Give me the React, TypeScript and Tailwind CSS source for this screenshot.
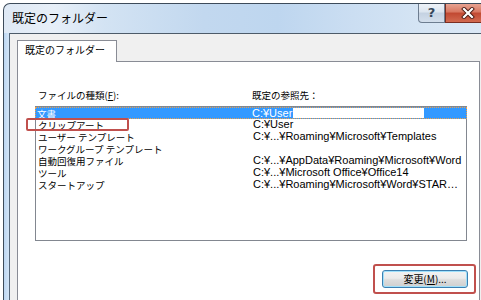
import React from 'react';

const rows = [
	{ name: "文書", path: "C:¥User", hidden: true },
	{ name: "クリップアート", path: "C:¥User" },
	{ name: "ユーザー テンプレート", path: "C:¥...¥Roaming¥Microsoft¥Templates" },
	{ name: "ワークグループ テンプレート", path: "" },
	{ name: "自動回復用ファイル", path: "C:¥...¥AppData¥Roaming¥Microsoft¥Word" },
	{ name: "ツール", path: "C:¥...¥Microsoft Office¥Office14" },
	{ name: "スタートアップ", path: "C:¥...¥Roaming¥Microsoft¥Word¥STAR…" },
];

const App: React.FC = () => {
	return (
		<div className="relative w-[481px] h-[300px] overflow-hidden bg-white pl-[3px] pt-[3px] font-['Noto_Sans_CJK_JP',sans-serif] text-black">
			<div className="flex flex-col w-[500px] h-[320px] rounded-tl-[7px] border-l border-t border-[#3d4b5a] overflow-hidden bg-[linear-gradient(90deg,#dfe9f5_0%,#e7eff8_10%,#d3e3f3_20%,#c2d8ef_40%,#bed6ef_55%,#cbdef2_70%,#d6e5f4_85%,#dde9f6_100%)]">
				{/* title bar */}
				<div className="flex h-[29px] pl-[8px]">
					<span className="self-center text-[12px] leading-none -mt-[1px]">既定のフォルダー</span>
					<div className="ml-auto mr-[13px] flex self-start -mt-px">
						<div className="w-[27px] h-[20px] rounded-bl-[4px] border border-t-0 border-[#6d7d90] bg-[linear-gradient(180deg,#f0f4f9_0%,#dde6f0_45%,#c5d2e2_55%,#d3dfec_100%)] flex items-center justify-center">
							<span className="text-[13px] font-bold leading-none text-[#36475a] font-['DejaVu_Sans',sans-serif]">?</span>
						</div>
						<div className="w-[45px] h-[20px] border border-t-0 border-[#7a2e22] bg-[linear-gradient(180deg,#e9a897_0%,#d97a64_45%,#c24a33_55%,#d26a50_100%)] flex items-center justify-center">
							<svg width="14" height="12" viewBox="0 0 14 12">
								<path d="M3 2 L11 10 M11 2 L3 10" stroke="#4a1a12" strokeWidth="4" strokeLinecap="square" />
								<path d="M3 2 L11 10 M11 2 L3 10" stroke="#ffffff" strokeWidth="2.2" strokeLinecap="square" />
							</svg>
						</div>
					</div>
				</div>

				<div className="flex flex-1">
					{/* left frame */}
					<div className="w-[5px] bg-[linear-gradient(90deg,#bcd6f1,#d3e5f7)]" />
					<div className="w-px bg-[#55677a]" />

					{/* client */}
					<div className="flex flex-col flex-1 bg-[#f0f0f0] border-t border-[#4d5b69] pt-[6px] pl-[7px] w-[471px] max-w-[471px] pr-[1px]">
						<div className="flex">
							<div className="relative z-10 -mb-px w-[100px] h-[22px] bg-white border border-b-0 border-[#898c95] pl-[7px] pt-[3px] text-[10px] leading-[12px]">
								既定のフォルダー
							</div>
						</div>
						<div className="flex flex-col flex-1 bg-white border border-[#898c95] pt-[27px] pl-[17px] pr-[12px]">
							<div className="flex text-[9.5px] leading-[12px]">
								<span className="pl-[3px] w-[217px]">ファイルの種類(<span className="underline">F</span>):</span>
								<span>既定の参照先：</span>
							</div>
							<div className="mt-[5px] h-[135px] border border-[#828790] leading-[12px]">
								{rows.map((r, i) => (
									<div
										key={i}
										className={
											i === 0
												? "flex h-[12px] bg-[#3399ff] text-white border border-dotted border-[#f0a04a] -mx-px"
												: "flex h-[12px] px-px"
										}
									>
										<span className="w-[216px] pl-[1px] whitespace-nowrap text-[9.5px]">{r.name}</span>
										<span className="whitespace-nowrap flex items-start font-['Liberation_Sans',sans-serif] text-[11px] leading-[12px] -mt-px">
											{r.path}
											{r.hidden && <span className="ml-[1px] mt-px inline-block w-[131px] h-[10px] bg-white" />}
										</span>
									</div>
								))}
							</div>
							<div className="flex justify-end mt-[29px] -mr-px">
								<div className="w-[86px] h-[18px] rounded-[3px] border border-[#3c7fb1] shadow-[inset_0_0_0_1px_#9fe0fb] bg-[linear-gradient(180deg,#f2f2f2_0%,#ebebeb_45%,#dddddd_55%,#cfcfcf_100%)] flex items-center justify-center text-[10px] leading-none">
									変更(<span className="underline">M</span>)...
								</div>
							</div>
						</div>
					</div>
				</div>
			</div>

			{/* annotation boxes */}
			<div className="absolute left-[26px] top-[118px] w-[103px] h-[13px] border-2 border-[#c0504d] rounded-[2px]" />
			<div className="absolute left-[373px] top-[264px] w-[103px] h-[30px] border-2 border-[#c0504d] rounded-[3px]" />
		</div>
	);
};

export default App;
